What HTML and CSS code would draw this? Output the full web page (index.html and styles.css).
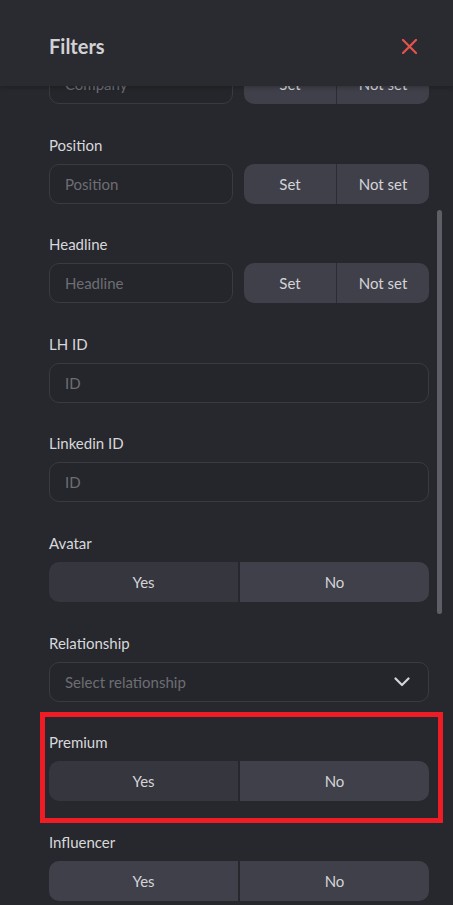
FILE: index.html
```html
<!DOCTYPE html>
<html>
<head>
<meta charset="utf-8">
<link rel="stylesheet" href="styles.css">
</head>
<body>
<div class="panel">
  <header class="header">
    <h1 class="title">Filters</h1>
    <svg class="close" width="15" height="15" viewBox="0 0 15 15"><path d="M1 1L14 14M14 1L1 14" stroke="#e5534b" stroke-width="2.2" stroke-linecap="square" fill="none"/></svg>
  </header>
  <div class="list">
    <div class="field">
      <div class="label">Company</div>
      <div class="split">
        <div class="input">Company</div>
        <div class="seg"><span>Set</span><span>Not set</span></div>
      </div>
    </div>
    <div class="field">
      <div class="label">Position</div>
      <div class="split">
        <div class="input">Position</div>
        <div class="seg"><span>Set</span><span>Not set</span></div>
      </div>
    </div>
    <div class="field">
      <div class="label">Headline</div>
      <div class="split">
        <div class="input">Headline</div>
        <div class="seg"><span>Set</span><span>Not set</span></div>
      </div>
    </div>
    <div class="field">
      <div class="label">LH ID</div>
      <div class="input">ID</div>
    </div>
    <div class="field">
      <div class="label">Linkedin ID</div>
      <div class="input">ID</div>
    </div>
    <div class="field">
      <div class="label">Avatar</div>
      <div class="toggle"><span class="dark">Yes</span><span>No</span></div>
    </div>
    <div class="field">
      <div class="label">Relationship</div>
      <div class="input select">Select relationship
        <svg width="16" height="10" viewBox="0 0 16 10"><path d="M1.5 1.5L8 8L14.5 1.5" stroke="#d4d4d8" stroke-width="2.2" fill="none" stroke-linecap="round" stroke-linejoin="round"/></svg>
      </div>
    </div>
    <div class="field highlighted">
      <div class="label">Premium</div>
      <div class="toggle"><span class="dark">Yes</span><span>No</span></div>
      <div class="mark"></div>
    </div>
    <div class="field">
      <div class="label">Influencer</div>
      <div class="toggle"><span>Yes</span><span>No</span></div>
    </div>
  </div>
  <div class="thumb"></div>
</div>
</body>
</html>
```
FILE: styles.css
```css
html, body {
  margin: 0;
  padding: 0;
  background: #27282d;
  overflow: hidden;
}
body {
  font-family: Lato, "Open Sans", sans-serif;
  color: #d6d6da;
}
.panel {
  position: relative;
  width: 453px;
  height: 905px;
  overflow: hidden;
}
.header {
  position: absolute;
  top: 0;
  left: 0;
  right: 0;
  height: 86px;
  box-sizing: border-box;
  padding: 6px 36px 0 49px;
  display: flex;
  align-items: center;
  justify-content: space-between;
  background: #2a2b30;
  box-shadow: 0 2px 4px rgba(0, 0, 0, 0.2);
  z-index: 2;
}
.title {
  margin: 0;
  font-size: 20px;
  line-height: 24px;
  font-weight: 700;
  color: #d2d2d6;
}
.close {
  display: block;
}
.list {
  padding: 35px 24px 0 49px;
  display: flex;
  flex-direction: column;
  gap: 30.6px;
}
.field {
  position: relative;
  display: flex;
  flex-direction: column;
}
.label {
  font-size: 15px;
  line-height: 20px;
  margin-bottom: 9px;
  color: #d8d8dc;
}
.split {
  display: grid;
  grid-template-columns: 184px 185px;
  gap: 11px;
}
.input {
  height: 40px;
  box-sizing: border-box;
  border: 1px solid #3a3b41;
  border-radius: 10px;
  background: #25262b;
  padding: 0 15px;
  display: flex;
  align-items: center;
  font-size: 15px;
  color: #6d6e74;
}
.select {
  justify-content: space-between;
  padding-right: 18px;
}
.select svg {
  display: block;
}
.seg {
  height: 40px;
  display: flex;
  background: #3f4049;
  border-radius: 10px;
  overflow: hidden;
}
.seg span {
  flex: 1;
  display: flex;
  align-items: center;
  justify-content: center;
  font-size: 15px;
  color: #d4d4d8;
}
.seg span + span {
  border-left: 1px solid #2c2d33;
}
.toggle {
  height: 40px;
  display: flex;
  gap: 2px;
  border-radius: 10px;
  overflow: hidden;
}
.toggle span {
  flex: 1;
  display: flex;
  align-items: center;
  justify-content: center;
  background: #3f4049;
  font-size: 15px;
  color: #d4d4d8;
}
.toggle span.dark {
  background: #35363e;
}
.mark {
  position: absolute;
  top: -20px;
  left: -9px;
  right: -14px;
  bottom: -22px;
  border: 5px solid #ee1c25;
  pointer-events: none;
}
.thumb {
  position: absolute;
  left: 437px;
  top: 210px;
  width: 5px;
  height: 404px;
  border-radius: 3px;
  background: #5e5f66;
  z-index: 3;
}
```
